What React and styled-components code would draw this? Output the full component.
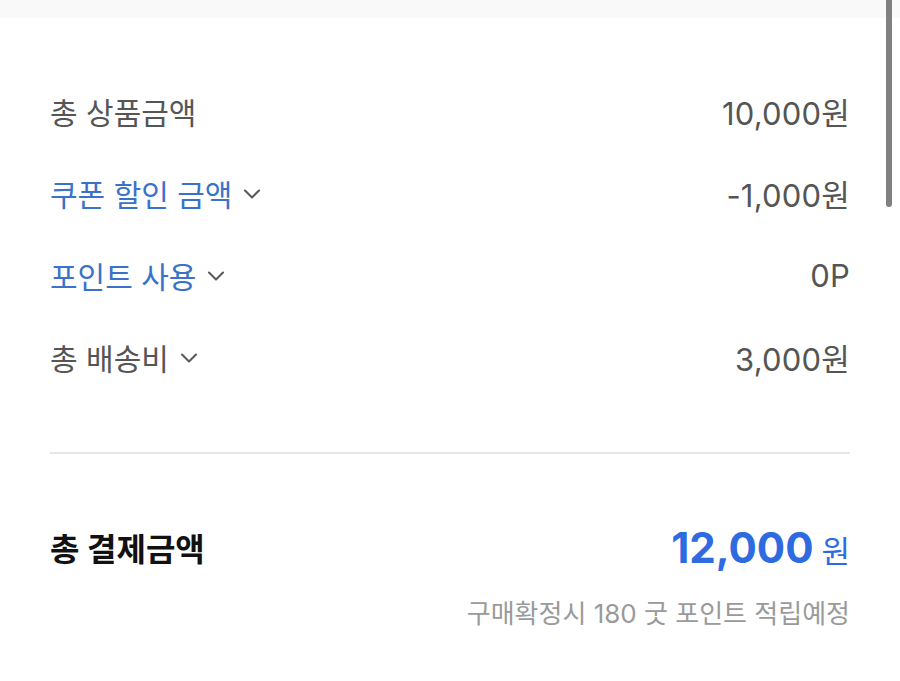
import React from "react";
import styled, { createGlobalStyle } from "styled-components";

const GlobalStyle = createGlobalStyle`
  html, body {
    margin: 0;
    padding: 0;
    background: #ffffff;
  }
  body {
    font-family: "Inter", "Noto Sans CJK KR", sans-serif;
    -webkit-font-smoothing: antialiased;
  }
`;

const Page = styled.div`
  position: relative;
  width: 900px;
  height: 681px;
  overflow: hidden;
  background: #ffffff;
`;

const TopBand = styled.div`
  height: 18px;
  background: #f9f9f9;
`;

const ScrollThumb = styled.div`
  position: absolute;
  top: 0;
  right: 8px;
  width: 6px;
  height: 207px;
  border-radius: 0 0 3px 3px;
  background: #808080;
`;

const Summary = styled.section`
  padding: 52px 50px 0 50px;
`;

const Rows = styled.div`
  display: flex;
  flex-direction: column;
`;

const Row = styled.div`
  height: 82px;
  display: flex;
  align-items: center;
  justify-content: space-between;
`;

const Label = styled.div`
  display: flex;
  align-items: center;
  gap: 11px;
  font-size: 30px;
  color: ${(p) => (p.$accent ? "#3b72c9" : "#555555")};
`;

const Value = styled.div`
  font-size: 31px;
  letter-spacing: 0.2px;
  color: #555555;
`;

const Chevron = styled.svg`
  width: 18px;
  height: 12px;
  margin-top: 2px;
  flex: none;
`;

const Divider = styled.hr`
  margin: 54px 0 0 0;
  border: none;
  height: 2px;
  background: #e6e6e6;
`;

const TotalRow = styled.div`
  margin-top: 63px;
  height: 60px;
  display: flex;
  align-items: center;
  justify-content: space-between;
`;

const TotalLabel = styled.div`
  font-size: 32px;
  font-weight: 700;
  color: #111111;
`;

const TotalAmount = styled.div`
  display: flex;
  align-items: baseline;
  gap: 8px;
  color: #2e6be0;
`;

const AmountNumber = styled.span`
  font-size: 42px;
  font-weight: 700;
`;

const AmountUnit = styled.span`
  font-size: 31px;
  font-weight: 400;
`;

const Note = styled.div`
  margin-top: 20px;
  line-height: 34px;
  text-align: right;
  font-size: 26px;
  color: #9a9a9a;
`;

const DownChevron = () => (
  <Chevron viewBox="0 0 18 12" aria-hidden="true">
    <path
      d="M2 2.5 L9 9.5 L16 2.5"
      fill="none"
      stroke="#5a5a5a"
      strokeWidth="2.1"
      strokeLinecap="round"
      strokeLinejoin="round"
    />
  </Chevron>
);

const lines = [
  { label: "총 상품금액", value: "10,000원" },
  { label: "쿠폰 할인 금액", value: "-1,000원", accent: true, toggle: true },
  { label: "포인트 사용", value: "0P", accent: true, toggle: true },
  { label: "총 배송비", value: "3,000원", toggle: true },
];

export default function App() {
  return (
    <Page>
      <GlobalStyle />
      <TopBand />
      <ScrollThumb />
      <Summary>
        <Rows>
          {lines.map((line) => (
            <Row key={line.label}>
              <Label $accent={line.accent}>
                {line.label}
                {line.toggle && <DownChevron />}
              </Label>
              <Value>{line.value}</Value>
            </Row>
          ))}
        </Rows>
        <Divider />
        <TotalRow>
          <TotalLabel>총 결제금액</TotalLabel>
          <TotalAmount>
            <AmountNumber>12,000</AmountNumber>
            <AmountUnit>원</AmountUnit>
          </TotalAmount>
        </TotalRow>
        <Note>구매확정시 180 굿 포인트 적립예정</Note>
      </Summary>
    </Page>
  );
}
